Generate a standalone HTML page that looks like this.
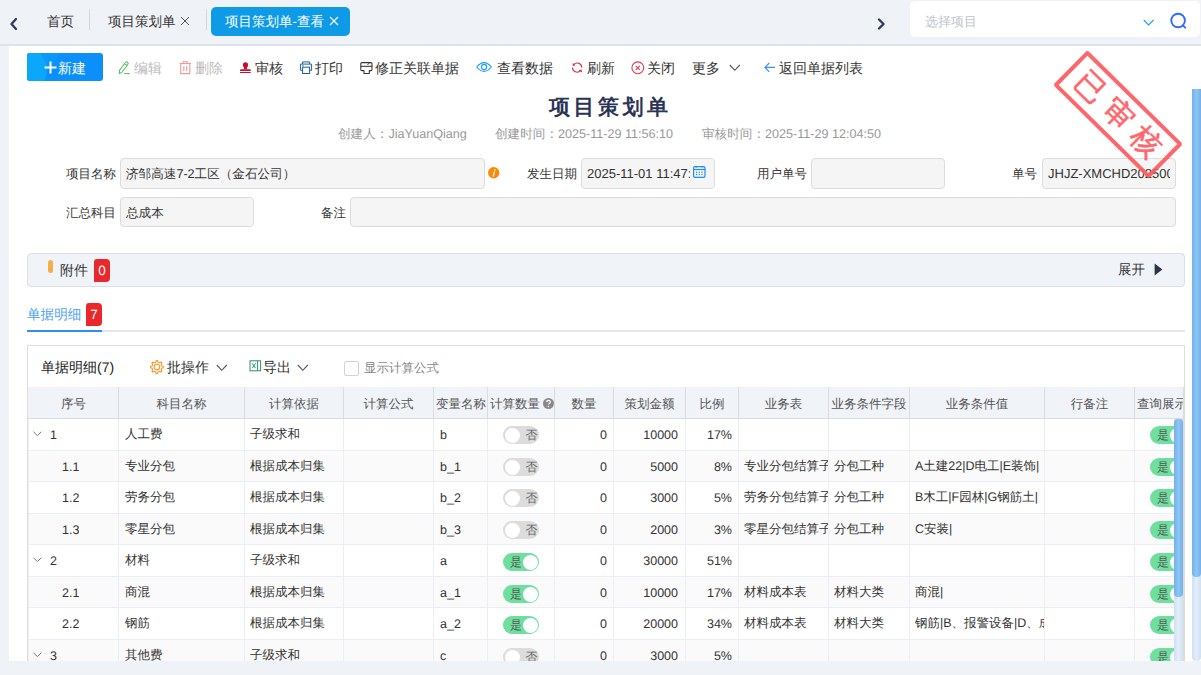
<!DOCTYPE html><html><head><meta charset="utf-8"><style>
*{box-sizing:border-box;margin:0;padding:0}
html,body{text-rendering:geometricPrecision;width:1201px;height:675px;overflow:hidden;background:#eff2f7;font-family:"Liberation Sans",sans-serif;font-size:14px;color:#333}
.a{position:absolute}
.t{position:absolute;white-space:nowrap;line-height:16px}
svg{position:absolute;overflow:visible}
.inp{position:absolute;background:#f5f5f5;border:1px solid #dcdcdc;border-radius:4px}
.lbl{position:absolute;white-space:nowrap;line-height:16px;font-size:12.5px;color:#333;text-align:right}
.cell{position:absolute;white-space:nowrap;overflow:hidden;line-height:16px;font-size:12.5px;color:#333}
.hd{position:absolute;white-space:nowrap;overflow:hidden;line-height:16px;font-size:12.5px;color:#555;text-align:center}
.sw{position:absolute;width:36px;height:18px;border-radius:9px;background:#dcdcdc}
.sw .k{position:absolute;top:1.5px;left:1.5px;width:15px;height:15px;border-radius:50%;background:#fff}
.sw .s{position:absolute;top:1px;left:22.5px;font-size:12px;line-height:16px;color:#666}
.sw.on{background:#6fdf9f}
.sw.on .k{left:19.5px}
.sw.on .s{left:7px;color:#555}
.badge{position:absolute;background:#e8282a;color:#fff;font-size:13.5px;line-height:24px;text-align:center;border-radius:3px 4px 4px 0}
</style></head><body>
<div class="a" style="left:0;top:0;width:1201px;height:44px;background:#eff2f7"></div>
<div class="a" style="left:0;top:44px;width:1201px;height:2px;background:#dee2ea"></div>
<svg style="left:9px;top:17px" width="9" height="14" viewBox="0 0 9 14"><path d="M7 2 L2.5 7 L7 12" fill="none" stroke="#2e3a5c" stroke-width="2.3" stroke-linecap="round" stroke-linejoin="round"/></svg>
<div class="t" style="left:47px;top:14px;font-size:13.5px">首页</div>
<div class="a" style="left:89px;top:9px;width:1px;height:21px;background:#d3d7de"></div>
<div class="t" style="left:108px;top:14px;font-size:13.5px">项目策划单</div>
<svg style="left:180px;top:16px" width="10" height="10" viewBox="0 0 10 10"><path d="M1 1L9 9M9 1L1 9" stroke="#555" stroke-width="1"/></svg>
<div class="a" style="left:206px;top:9px;width:1px;height:21px;background:#d3d7de"></div>
<div class="a" style="left:211px;top:7px;width:139px;height:29px;background:#0d9be8;border-radius:5px"></div>
<div class="t" style="left:225px;top:14px;color:#fff;font-size:13.5px">项目策划单-查看</div>
<svg style="left:329px;top:16px" width="10" height="10" viewBox="0 0 10 10"><path d="M1 1L9 9M9 1L1 9" stroke="#fff" stroke-width="1.1"/></svg>
<svg style="left:877px;top:18px" width="9" height="12" viewBox="0 0 9 12"><path d="M2 1.5 L6.5 6 L2 10.5" fill="none" stroke="#2e3a5c" stroke-width="2.3" stroke-linecap="round" stroke-linejoin="round"/></svg>
<div class="a" style="left:910px;top:1px;width:290px;height:36px;background:#fff;border-radius:5px"></div>
<div class="t" style="left:925px;top:14px;color:#c0c4cc;font-size:13px">选择项目</div>
<svg style="left:1143px;top:19px" width="12" height="8" viewBox="0 0 12 8"><path d="M0.8 1 L5.5 6 L10.6 1" fill="none" stroke="#1f9cf8" stroke-width="1.1"/></svg>
<svg style="left:1169px;top:13px" width="19" height="17" viewBox="0 0 19 17"><circle cx="9.1" cy="7.5" r="6.8" fill="none" stroke="#2f6cfb" stroke-width="1.9"/><path d="M13.9 12.3 L16.3 14.7" stroke="#2f6cfb" stroke-width="1.9" stroke-linecap="round"/></svg>
<div class="a" style="left:9px;top:46px;width:1192px;height:615px;background:#fff"></div>
<div class="a" style="left:27px;top:53px;width:76px;height:28px;border-radius:3px;overflow:hidden;background:#0b8ffb"><div class="a" style="left:-35px;top:-48px;width:70px;height:70px;border-radius:50%;background:#0b97fb"></div><div class="a" style="left:-26px;top:-6px;width:46px;height:46px;border-radius:50%;background:#0aa7fb"></div></div>
<svg style="left:44px;top:61px" width="13" height="13" viewBox="0 0 13 13"><path d="M0.5 6.5H12.5M6.5 0.5V12.5" stroke="#fff" stroke-width="2"/></svg>
<div class="t" style="left:58px;top:60px;color:#fff;font-size:14px">新建</div>
<svg style="left:118px;top:61px" width="14" height="14" viewBox="0 0 14 14"><path d="M1.3 12.6 L1.5 9.4 L7.4 1.5 Q8.5 0.4 9.7 1.4 Q10.6 2.4 9.8 3.5 L3.9 11.3 Z M6.6 2.7 L9 4.5" fill="none" stroke="#5cbf61" stroke-width="1.05" stroke-linejoin="round"/><path d="M6.2 12.6 H12" stroke="#5cbf61" stroke-width="1.05"/></svg>
<div class="t" style="left:134px;top:60px;color:#bbbbbb">编辑</div>
<svg style="left:179px;top:61px" width="13" height="14" viewBox="0 0 13 14"><path d="M0.5 2.5 H12" stroke="#f29a9a" stroke-width="1.1"/><path d="M4.2 2.5 V0.8 H8.3 V2.5" fill="none" stroke="#f29a9a" stroke-width="1.1"/><path d="M1.7 2.5 V12.6 H10.8 V2.5" fill="none" stroke="#f29a9a" stroke-width="1.1"/><path d="M4.8 5.2 V10 M7.7 5.2 V10" stroke="#f29a9a" stroke-width="1.1"/></svg>
<div class="t" style="left:195px;top:60px;color:#bbbbbb">删除</div>
<svg style="left:239px;top:61px" width="13" height="13" viewBox="0 0 13 13"><circle cx="6.5" cy="3.9" r="2.6" fill="#c8102e"/><path d="M5.2 5.5 H7.8 L8.1 8.3 H4.9 Z" fill="#c8102e"/><path d="M1 9.9 V9.2 Q1 8.2 2 8.2 H10.8 Q11.8 8.2 11.8 9.2 V9.9 Z" fill="#c8102e"/><rect x="1" y="11" width="10.8" height="1" fill="#c8102e"/></svg>
<div class="t" style="left:255px;top:60px;color:#333">审核</div>
<svg style="left:300px;top:61px" width="13" height="14" viewBox="0 0 13 14"><path d="M2.6 3 V0.9 H9.6 V3" fill="none" stroke="#1f5e9e" stroke-width="1"/><path d="M2.6 9.3 H0.6 V3.1 H11.6 V9.3 H9.6" fill="none" stroke="#1f5e9e" stroke-width="1" stroke-linejoin="round"/><rect x="2.6" y="6.2" width="7" height="6.3" fill="none" stroke="#1f5e9e" stroke-width="1"/><path d="M2.2 4.9 H3.8" stroke="#1f5e9e" stroke-width="0.9"/></svg>
<div class="t" style="left:315px;top:60px;color:#333">打印</div>
<svg style="left:360px;top:62px" width="13" height="12" viewBox="0 0 13 12"><path d="M4 11.4 V8.6 H1.9 Q0.8 8.6 0.8 7.5 V1.6 Q0.8 0.6 1.9 0.6 H10.9 Q12 0.6 12 1.6 V7.5 Q12 8.6 10.9 8.6 H9.3 V11.4 Z" fill="none" stroke="#333" stroke-width="1.05" stroke-linejoin="round"/><path d="M0.8 4.3 H12" stroke="#333" stroke-width="1.05"/><path d="M7.6 2.8 L9.6 0.8" stroke="#333" stroke-width="1"/></svg>
<div class="t" style="left:375px;top:60px;color:#333">修正关联单据</div>
<svg style="left:476px;top:61px" width="17" height="12" viewBox="0 0 17 12"><path d="M0.8 6 Q8 -2.8 15.4 6 Q8 14.8 0.8 6 Z" fill="none" stroke="#19a0f5" stroke-width="1.1"/><circle cx="8.1" cy="6" r="2.6" fill="none" stroke="#19a0f5" stroke-width="1.1"/></svg>
<div class="t" style="left:497px;top:60px;color:#333">查看数据</div>
<svg style="left:571px;top:61px" width="13" height="13" viewBox="0 0 13 13"><path d="M2.9 3.3 A4.6 4.6 0 0 1 10.7 6.5" fill="none" stroke="#d9234a" stroke-width="1.05"/><path d="M1.5 6.5 A4.6 4.6 0 0 0 9.4 9.7" fill="none" stroke="#d9234a" stroke-width="1.05"/><path d="M1.6 1.9 L1.9 4.9 L4.6 4.2 Z" fill="#d9234a"/><path d="M10.9 11.6 L10.6 8.5 L7.8 9.3 Z" fill="#d9234a"/></svg>
<div class="t" style="left:587px;top:60px;color:#333">刷新</div>
<svg style="left:631px;top:61px" width="14" height="14" viewBox="0 0 14 14"><circle cx="6.8" cy="6.8" r="5.9" fill="none" stroke="#e8384f" stroke-width="1.1"/><path d="M4.8 4.8 L8.8 8.8 M8.8 4.8 L4.8 8.8" stroke="#e8384f" stroke-width="1.1"/></svg>
<div class="t" style="left:647px;top:60px;color:#333">关闭</div>
<div class="t" style="left:692px;top:60px;color:#333">更多</div>
<svg style="left:729px;top:64px" width="12" height="8" viewBox="0 0 12 8"><path d="M0.8 1 L5.8 6.3 L10.8 1" fill="none" stroke="#555" stroke-width="1.1"/></svg>
<svg style="left:764px;top:62px" width="12" height="11" viewBox="0 0 12 11"><path d="M5.3 1 L1 5.4 L5.3 9.8 M1 5.4 H11" fill="none" stroke="#3d8ff5" stroke-width="1.2"/></svg>
<div class="t" style="left:779px;top:60px;color:#333">返回单据列表</div>
<div class="t" style="left:549px;top:95px;font-size:21px;line-height:26px;font-weight:bold;color:#2b3456;letter-spacing:3.5px">项目策划单</div>
<div class="t" style="left:338px;top:126px;font-size:12.6px;color:#999">创建人：JiaYuanQiang</div>
<div class="t" style="left:495px;top:126px;font-size:12.6px;color:#999">创建时间：2025-11-29 11:56:10</div>
<div class="t" style="left:702px;top:126px;font-size:12.6px;color:#999">审核时间：2025-11-29 12:04:50</div>
<div class="lbl" style="left:66px;top:166px">项目名称</div>
<div class="inp" style="left:120px;top:158px;width:365px;height:31px"></div>
<div class="t" style="left:126px;top:166px;font-size:12.6px;color:#333">济邹高速7-2工区（金石公司）</div>
<svg style="left:488px;top:167px" width="12" height="12" viewBox="0 0 12 12"><circle cx="5.7" cy="5.8" r="5.7" fill="#fc8a08"/><circle cx="6.9" cy="3" r="0.8" fill="#fff"/><path d="M6.4 5 L5.3 9" stroke="#fff" stroke-width="1.3" stroke-linecap="round"/></svg>
<div class="lbl" style="left:527px;top:166px">发生日期</div>
<div class="inp" style="left:581px;top:158px;width:134px;height:31px;overflow:hidden"><div class="t" style="left:5px;top:7px;font-size:13px;color:#333">2025-11-01 11:47:31</div><div class="a" style="left:108px;top:0;width:26px;height:29px;background:#f5f5f5"></div></div>
<svg style="left:693px;top:166px" width="13" height="12" viewBox="0 0 13 12"><rect x="0.6" y="0.7" width="11.4" height="10.7" rx="1.3" fill="none" stroke="#1f8cf7" stroke-width="1.2"/><path d="M0.6 3.5 H12" stroke="#1f8cf7" stroke-width="1.2"/><path d="M3.4 0 V1.6 M9.4 0 V1.6" stroke="#1f8cf7" stroke-width="1.4"/><g fill="#1f8cf7"><circle cx="3.6" cy="6.3" r="0.7"/><circle cx="6.3" cy="6.3" r="0.7"/><circle cx="9" cy="6.3" r="0.7"/><circle cx="3.6" cy="8.5" r="0.7"/><circle cx="6.3" cy="8.5" r="0.7"/><circle cx="9" cy="8.5" r="0.7"/></g></svg>
<div class="lbl" style="left:757px;top:166px">用户单号</div>
<div class="inp" style="left:811px;top:158px;width:134px;height:31px"></div>
<div class="lbl" style="left:1012px;top:166px">单号</div>
<div class="inp" style="left:1042px;top:158px;width:134px;height:31px;overflow:hidden"><div class="t" style="left:5px;top:7px;font-size:13px;color:#333;width:122px;overflow:hidden">JHJZ-XMCHD20250001</div></div>
<div class="lbl" style="left:66px;top:205px">汇总科目</div>
<div class="inp" style="left:120px;top:197px;width:134px;height:30px"></div>
<div class="t" style="left:126px;top:205px;font-size:12.6px;color:#333">总成本</div>
<div class="lbl" style="left:321px;top:205px">备注</div>
<div class="inp" style="left:350px;top:197px;width:826px;height:30px"></div>
<div class="a" style="left:27px;top:253px;width:1158px;height:34px;background:#f0f3f8;border:1px solid #dcdfe6;border-radius:4px"></div>
<div class="a" style="left:48px;top:260px;width:5px;height:13px;border-radius:3px;background:#f7ac4a"></div>
<div class="t" style="left:60px;top:262px;font-size:14px;color:#333">附件</div>
<div class="badge" style="left:94px;top:259px;width:16px;height:23px">0</div>
<div class="t" style="left:1118px;top:262px;font-size:13.5px;color:#333">展开</div>
<svg style="left:1154px;top:263px" width="9" height="13" viewBox="0 0 9 13"><path d="M0.6 0.6 L8.4 6.6 L0.6 12.6 Z" fill="#2a3348"/></svg>
<div class="t" style="left:27px;top:307px;font-size:13.6px;color:#4b9ff5">单据明细</div>
<div class="badge" style="left:86px;top:303px;width:16px;height:23px">7</div>
<div class="a" style="left:27px;top:330px;width:1158px;height:2px;background:#e4e7ed"></div>
<div class="a" style="left:27px;top:330px;width:75px;height:2px;background:#2f8df5"></div>
<div class="a" style="left:27px;top:345px;width:1158px;height:330px;border:1px solid #dedede;border-bottom:none"></div>
<div class="t" style="left:41px;top:359px;font-size:14px;color:#222">单据明细(7)</div>
<svg style="left:149px;top:360px" width="15" height="14" viewBox="0 0 15 14"><path d="M7.2 0.6 L8.6 0.6 L9 2.2 L10.5 2.9 L11.9 2 L12.9 3 L12.1 4.5 L12.7 6 L14.3 6.4 L14.3 7.8 L12.7 8.2 L12.1 9.7 L12.9 11.1 L11.9 12.1 L10.5 11.3 L9 12 L8.6 13.6 L7.2 13.6 L6.8 12 L5.3 11.3 L3.9 12.1 L2.9 11.1 L3.7 9.7 L3.1 8.2 L1.5 7.8 L1.5 6.4 L3.1 6 L3.7 4.5 L2.9 3 L3.9 2 L5.3 2.9 L6.8 2.2 Z" fill="none" stroke="#f39a2c" stroke-width="1.1" stroke-linejoin="round"/><circle cx="7.9" cy="7.1" r="2.8" fill="none" stroke="#f39a2c" stroke-width="1.1"/></svg>
<div class="t" style="left:167px;top:359px;font-size:14px;color:#333">批操作</div>
<svg style="left:216px;top:364px" width="12" height="8" viewBox="0 0 12 8"><path d="M0.8 1 L5.8 6.3 L10.8 1" fill="none" stroke="#555" stroke-width="1.1"/></svg>
<svg style="left:249px;top:360px" width="13" height="12" viewBox="0 0 13 12"><rect x="1" y="0.8" width="10.6" height="10" fill="none" stroke="#2b8f6e" stroke-width="1"/><path d="M8.6 0.8 V10.8" stroke="#2b8f6e" stroke-width="1"/><path d="M3.2 3.4 L6.6 8.2 M6.6 3.4 L3.2 8.2" stroke="#2b8f6e" stroke-width="1"/></svg>
<div class="t" style="left:263px;top:359px;font-size:14px;color:#333">导出</div>
<svg style="left:297px;top:364px" width="12" height="8" viewBox="0 0 12 8"><path d="M0.8 1 L5.8 6.3 L10.8 1" fill="none" stroke="#555" stroke-width="1.1"/></svg>
<div class="a" style="left:344px;top:361px;width:15px;height:15px;border:1px solid #cfd3da;border-radius:2px;background:#fff"></div>
<div class="t" style="left:364px;top:360px;font-size:12.5px;color:#888">显示计算公式</div>
<div class="a" style="left:28px;top:387px;width:1156px;height:31px;background:#f0f3f8"></div>
<div class="a" style="left:28px;top:418px;width:1156px;height:1px;background:#dcdcdc"></div>
<div class="a" style="left:28px;top:419px;width:1156px;height:31px;background:#ffffff"></div>
<div class="a" style="left:28px;top:450px;width:1156px;height:1px;background:#ebeef5"></div>
<div class="a" style="left:28px;top:451px;width:1156px;height:30px;background:#fafafa"></div>
<div class="a" style="left:28px;top:481px;width:1156px;height:1px;background:#ebeef5"></div>
<div class="a" style="left:28px;top:482px;width:1156px;height:31px;background:#ffffff"></div>
<div class="a" style="left:28px;top:513px;width:1156px;height:1px;background:#ebeef5"></div>
<div class="a" style="left:28px;top:514px;width:1156px;height:30px;background:#fafafa"></div>
<div class="a" style="left:28px;top:544px;width:1156px;height:1px;background:#ebeef5"></div>
<div class="a" style="left:28px;top:545px;width:1156px;height:31px;background:#ffffff"></div>
<div class="a" style="left:28px;top:576px;width:1156px;height:1px;background:#ebeef5"></div>
<div class="a" style="left:28px;top:577px;width:1156px;height:30px;background:#fafafa"></div>
<div class="a" style="left:28px;top:607px;width:1156px;height:1px;background:#ebeef5"></div>
<div class="a" style="left:28px;top:608px;width:1156px;height:31px;background:#ffffff"></div>
<div class="a" style="left:28px;top:639px;width:1156px;height:1px;background:#ebeef5"></div>
<div class="a" style="left:28px;top:640px;width:1156px;height:21px;background:#fafafa"></div>
<div class="a" style="left:118px;top:387px;width:1px;height:31px;background:#dcdcdc"></div>
<div class="a" style="left:118px;top:419px;width:1px;height:242px;background:#ebeef5"></div>
<div class="a" style="left:244px;top:387px;width:1px;height:31px;background:#dcdcdc"></div>
<div class="a" style="left:244px;top:419px;width:1px;height:242px;background:#ebeef5"></div>
<div class="a" style="left:343px;top:387px;width:1px;height:31px;background:#dcdcdc"></div>
<div class="a" style="left:343px;top:419px;width:1px;height:242px;background:#ebeef5"></div>
<div class="a" style="left:433px;top:387px;width:1px;height:31px;background:#dcdcdc"></div>
<div class="a" style="left:433px;top:419px;width:1px;height:242px;background:#ebeef5"></div>
<div class="a" style="left:487px;top:387px;width:1px;height:31px;background:#dcdcdc"></div>
<div class="a" style="left:487px;top:419px;width:1px;height:242px;background:#ebeef5"></div>
<div class="a" style="left:554px;top:387px;width:1px;height:31px;background:#dcdcdc"></div>
<div class="a" style="left:554px;top:419px;width:1px;height:242px;background:#ebeef5"></div>
<div class="a" style="left:613px;top:387px;width:1px;height:31px;background:#dcdcdc"></div>
<div class="a" style="left:613px;top:419px;width:1px;height:242px;background:#ebeef5"></div>
<div class="a" style="left:685px;top:387px;width:1px;height:31px;background:#dcdcdc"></div>
<div class="a" style="left:685px;top:419px;width:1px;height:242px;background:#ebeef5"></div>
<div class="a" style="left:738px;top:387px;width:1px;height:31px;background:#dcdcdc"></div>
<div class="a" style="left:738px;top:419px;width:1px;height:242px;background:#ebeef5"></div>
<div class="a" style="left:828px;top:387px;width:1px;height:31px;background:#dcdcdc"></div>
<div class="a" style="left:828px;top:419px;width:1px;height:242px;background:#ebeef5"></div>
<div class="a" style="left:909px;top:387px;width:1px;height:31px;background:#dcdcdc"></div>
<div class="a" style="left:909px;top:419px;width:1px;height:242px;background:#ebeef5"></div>
<div class="a" style="left:1044px;top:387px;width:1px;height:31px;background:#dcdcdc"></div>
<div class="a" style="left:1044px;top:419px;width:1px;height:242px;background:#ebeef5"></div>
<div class="a" style="left:1134px;top:387px;width:1px;height:31px;background:#dcdcdc"></div>
<div class="a" style="left:1134px;top:419px;width:1px;height:242px;background:#ebeef5"></div>
<div class="hd" style="left:29px;top:396px;width:89px">序号</div>
<div class="hd" style="left:119px;top:396px;width:125px">科目名称</div>
<div class="hd" style="left:245px;top:396px;width:98px">计算依据</div>
<div class="hd" style="left:344px;top:396px;width:89px">计算公式</div>
<div class="hd" style="left:434px;top:396px;width:53px;text-align:left;padding-left:2px">变量名称</div>
<div class="hd" style="left:488px;top:396px;width:66px;text-align:left;padding-left:2px">计算数量</div>
<svg style="left:543px;top:398px" width="11" height="11" viewBox="0 0 11 11"><circle cx="5.5" cy="5.5" r="5.5" fill="#8a8a8a"/><path d="M3.7 4.1 Q3.7 2.3 5.5 2.3 Q7.3 2.3 7.3 3.9 Q7.3 4.9 6.2 5.4 Q5.5 5.8 5.5 6.6" fill="none" stroke="#fff" stroke-width="1.2"/><circle cx="5.5" cy="8.5" r="0.75" fill="#fff"/></svg>
<div class="hd" style="left:555px;top:396px;width:58px">数量</div>
<div class="hd" style="left:614px;top:396px;width:71px">策划金额</div>
<div class="hd" style="left:686px;top:396px;width:52px">比例</div>
<div class="hd" style="left:739px;top:396px;width:89px">业务表</div>
<div class="hd" style="left:829px;top:396px;width:80px">业务条件字段</div>
<div class="hd" style="left:910px;top:396px;width:134px">业务条件值</div>
<div class="hd" style="left:1045px;top:396px;width:89px">行备注</div>
<div class="hd" style="left:1135px;top:396px;width:48px;text-align:left;padding-left:2px">查询展示</div>
<svg style="left:33px;top:431px" width="9" height="6" viewBox="0 0 9 6"><path d="M0.5 0.8 L4.4 4.6 L8.3 0.8" fill="none" stroke="#777" stroke-width="1"/></svg>
<div class="cell" style="left:50px;top:427px">1</div>
<div class="cell" style="left:125px;top:426px;width:118px">人工费</div>
<div class="cell" style="left:250px;top:426px;width:92px">子级求和</div>
<div class="cell" style="left:440px;top:427px;width:47px">b</div>
<div class="sw" style="left:503px;top:426px"><div class="k"></div><div class="s">否</div></div>
<div class="cell" style="left:555px;top:427px;width:52px;text-align:right">0</div>
<div class="cell" style="left:614px;top:427px;width:64px;text-align:right">10000</div>
<div class="cell" style="left:686px;top:427px;width:46px;text-align:right">17%</div>
<div class="cell" style="left:744px;top:426px;width:84px"></div>
<div class="cell" style="left:834px;top:426px;width:74px"></div>
<div class="cell" style="left:915px;top:426px;width:129px"></div>
<div class="sw on" style="left:1150px;top:426px"><div class="s">是</div><div class="k"></div></div>
<div class="cell" style="left:62px;top:459px">1.1</div>
<div class="cell" style="left:125px;top:458px;width:118px">专业分包</div>
<div class="cell" style="left:250px;top:458px;width:92px">根据成本归集</div>
<div class="cell" style="left:440px;top:459px;width:47px">b_1</div>
<div class="sw" style="left:503px;top:458px"><div class="k"></div><div class="s">否</div></div>
<div class="cell" style="left:555px;top:459px;width:52px;text-align:right">0</div>
<div class="cell" style="left:614px;top:459px;width:64px;text-align:right">5000</div>
<div class="cell" style="left:686px;top:459px;width:46px;text-align:right">8%</div>
<div class="cell" style="left:744px;top:458px;width:84px">专业分包结算子表</div>
<div class="cell" style="left:834px;top:458px;width:74px">分包工种</div>
<div class="cell" style="left:915px;top:458px;width:129px">A土建22|D电工|E装饰|</div>
<div class="sw on" style="left:1150px;top:458px"><div class="s">是</div><div class="k"></div></div>
<div class="cell" style="left:62px;top:490px">1.2</div>
<div class="cell" style="left:125px;top:489px;width:118px">劳务分包</div>
<div class="cell" style="left:250px;top:489px;width:92px">根据成本归集</div>
<div class="cell" style="left:440px;top:490px;width:47px">b_2</div>
<div class="sw" style="left:503px;top:489px"><div class="k"></div><div class="s">否</div></div>
<div class="cell" style="left:555px;top:490px;width:52px;text-align:right">0</div>
<div class="cell" style="left:614px;top:490px;width:64px;text-align:right">3000</div>
<div class="cell" style="left:686px;top:490px;width:46px;text-align:right">5%</div>
<div class="cell" style="left:744px;top:489px;width:84px">劳务分包结算子表</div>
<div class="cell" style="left:834px;top:489px;width:74px">分包工种</div>
<div class="cell" style="left:915px;top:489px;width:129px">B木工|F园林|G钢筋土|</div>
<div class="sw on" style="left:1150px;top:489px"><div class="s">是</div><div class="k"></div></div>
<div class="cell" style="left:62px;top:522px">1.3</div>
<div class="cell" style="left:125px;top:521px;width:118px">零星分包</div>
<div class="cell" style="left:250px;top:521px;width:92px">根据成本归集</div>
<div class="cell" style="left:440px;top:522px;width:47px">b_3</div>
<div class="sw" style="left:503px;top:521px"><div class="k"></div><div class="s">否</div></div>
<div class="cell" style="left:555px;top:522px;width:52px;text-align:right">0</div>
<div class="cell" style="left:614px;top:522px;width:64px;text-align:right">2000</div>
<div class="cell" style="left:686px;top:522px;width:46px;text-align:right">3%</div>
<div class="cell" style="left:744px;top:521px;width:84px">零星分包结算子表</div>
<div class="cell" style="left:834px;top:521px;width:74px">分包工种</div>
<div class="cell" style="left:915px;top:521px;width:129px">C安装|</div>
<div class="sw on" style="left:1150px;top:521px"><div class="s">是</div><div class="k"></div></div>
<svg style="left:33px;top:557px" width="9" height="6" viewBox="0 0 9 6"><path d="M0.5 0.8 L4.4 4.6 L8.3 0.8" fill="none" stroke="#777" stroke-width="1"/></svg>
<div class="cell" style="left:50px;top:553px">2</div>
<div class="cell" style="left:125px;top:552px;width:118px">材料</div>
<div class="cell" style="left:250px;top:552px;width:92px">子级求和</div>
<div class="cell" style="left:440px;top:553px;width:47px">a</div>
<div class="sw on" style="left:503px;top:553px"><div class="s">是</div><div class="k"></div></div>
<div class="cell" style="left:555px;top:553px;width:52px;text-align:right">0</div>
<div class="cell" style="left:614px;top:553px;width:64px;text-align:right">30000</div>
<div class="cell" style="left:686px;top:553px;width:46px;text-align:right">51%</div>
<div class="cell" style="left:744px;top:552px;width:84px"></div>
<div class="cell" style="left:834px;top:552px;width:74px"></div>
<div class="cell" style="left:915px;top:552px;width:129px"></div>
<div class="sw on" style="left:1150px;top:553px"><div class="s">是</div><div class="k"></div></div>
<div class="cell" style="left:62px;top:585px">2.1</div>
<div class="cell" style="left:125px;top:584px;width:118px">商混</div>
<div class="cell" style="left:250px;top:584px;width:92px">根据成本归集</div>
<div class="cell" style="left:440px;top:585px;width:47px">a_1</div>
<div class="sw on" style="left:503px;top:585px"><div class="s">是</div><div class="k"></div></div>
<div class="cell" style="left:555px;top:585px;width:52px;text-align:right">0</div>
<div class="cell" style="left:614px;top:585px;width:64px;text-align:right">10000</div>
<div class="cell" style="left:686px;top:585px;width:46px;text-align:right">17%</div>
<div class="cell" style="left:744px;top:584px;width:84px">材料成本表</div>
<div class="cell" style="left:834px;top:584px;width:74px">材料大类</div>
<div class="cell" style="left:915px;top:584px;width:129px">商混|</div>
<div class="sw on" style="left:1150px;top:585px"><div class="s">是</div><div class="k"></div></div>
<div class="cell" style="left:62px;top:616px">2.2</div>
<div class="cell" style="left:125px;top:615px;width:118px">钢筋</div>
<div class="cell" style="left:250px;top:615px;width:92px">根据成本归集</div>
<div class="cell" style="left:440px;top:616px;width:47px">a_2</div>
<div class="sw on" style="left:503px;top:616px"><div class="s">是</div><div class="k"></div></div>
<div class="cell" style="left:555px;top:616px;width:52px;text-align:right">0</div>
<div class="cell" style="left:614px;top:616px;width:64px;text-align:right">20000</div>
<div class="cell" style="left:686px;top:616px;width:46px;text-align:right">34%</div>
<div class="cell" style="left:744px;top:615px;width:84px">材料成本表</div>
<div class="cell" style="left:834px;top:615px;width:74px">材料大类</div>
<div class="cell" style="left:915px;top:615px;width:129px">钢筋|B、报警设备|D、成品</div>
<div class="sw on" style="left:1150px;top:616px"><div class="s">是</div><div class="k"></div></div>
<svg style="left:33px;top:652px" width="9" height="6" viewBox="0 0 9 6"><path d="M0.5 0.8 L4.4 4.6 L8.3 0.8" fill="none" stroke="#777" stroke-width="1"/></svg>
<div class="cell" style="left:50px;top:648px">3</div>
<div class="cell" style="left:125px;top:647px;width:118px">其他费</div>
<div class="cell" style="left:250px;top:647px;width:92px">子级求和</div>
<div class="cell" style="left:440px;top:648px;width:47px">c</div>
<div class="sw" style="left:503px;top:648px"><div class="k"></div><div class="s">否</div></div>
<div class="cell" style="left:555px;top:648px;width:52px;text-align:right">0</div>
<div class="cell" style="left:614px;top:648px;width:64px;text-align:right">3000</div>
<div class="cell" style="left:686px;top:648px;width:46px;text-align:right">5%</div>
<div class="cell" style="left:744px;top:647px;width:84px"></div>
<div class="cell" style="left:834px;top:647px;width:74px"></div>
<div class="cell" style="left:915px;top:647px;width:129px"></div>
<div class="sw on" style="left:1150px;top:648px"><div class="s">是</div><div class="k"></div></div>
<div class="a" style="left:28px;top:419px;width:1px;height:242px;background:#ebeef5"></div>
<div class="a" style="left:1174px;top:419px;width:9px;height:242px;background:linear-gradient(90deg,#cfe0f2,#e3eefa 50%,#cfe0f2);border-radius:0"></div>
<div class="a" style="left:1174px;top:419px;width:9px;height:178px;background:linear-gradient(90deg,#74b1ea,#8cc6f5 50%,#74b1ea);border-radius:4px"></div>
<div class="a" style="left:1183px;top:387px;width:2px;height:274px;background:#dcdcdc"></div>
<div class="a" style="left:1185px;top:46px;width:7px;height:615px;background:#fff"></div>
<div class="a" style="left:1192px;top:89px;width:9px;height:572px;background:linear-gradient(90deg,#cfe0f2,#e3eefa 50%,#cfe0f2);border-radius:0 0 4px 4px"></div>
<div class="a" style="left:1192px;top:89px;width:9px;height:488px;background:linear-gradient(90deg,#74b1ea,#8cc6f5 50%,#74b1ea);border-radius:0 0 4px 4px"></div>
<div class="a" style="left:0;top:661px;width:1201px;height:14px;background:#eff2f7"></div>
<div class="a" style="left:1050.5px;top:89.5px;width:134px;height:49px;border:4px solid #ff5a5f;border-radius:3px;transform:rotate(44.5deg);opacity:.92"><div class="t" style="left:0;top:4px;width:126px;text-align:center;font-size:30px;line-height:33px;-webkit-text-stroke:0.6px #ff5a5f;color:#ff5a5f;letter-spacing:9px;padding-left:9px;font-family:'Liberation Serif',serif">已审核</div></div>
</body></html>
